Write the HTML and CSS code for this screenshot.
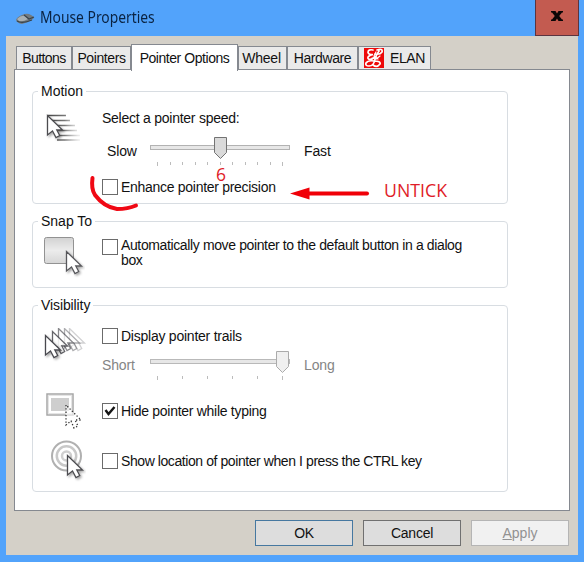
FILE: index.html
```html
<!DOCTYPE html>
<html lang="en">
<head>
<meta charset="utf-8">
<title>Mouse Properties</title>
<link rel="stylesheet" href="styles.css">
</head>
<body>
<svg class="defs" width="0" height="0" aria-hidden="true">
  <defs>
    <filter id="soft" x="-30%" y="-30%" width="180%" height="180%"><feDropShadow dx="1.5" dy="1.5" stdDeviation="1" flood-color="#000" flood-opacity=".35"/></filter>
    <linearGradient id="tile" x1="0" y1="0" x2="0" y2="1"><stop offset="0" stop-color="#d2d2d2"/><stop offset=".5" stop-color="#ececec"/><stop offset="1" stop-color="#d6d6d6"/></linearGradient>
    <linearGradient id="streak" gradientUnits="userSpaceOnUse" x1="3" y1="0" x2="38" y2="0"><stop offset="0" stop-color="#444"/><stop offset=".5" stop-color="#777"/><stop offset="1" stop-color="#bbb" stop-opacity=".1"/></linearGradient>
    <path id="arrow" d="M.5 .5V20L5.5 16L9 22.5L12.7 20.5L9.8 15H15.5Z"/>
  </defs>
</svg>
<div class="window">
  <header class="titlebar">
    <svg class="mouse" width="20" height="12" viewBox="0 0 20 12"><path d="M0 7Q1 4 6 2Q11-.5 15 2Q19 4 17 6Q12 10 6 11Q1 10 0 7Z" fill="#737b80"/><path d="M1 6Q5 2 9 3L12 6Q7 9 3 8Z" fill="#a9b0b3"/><path d="M8 2L13 6L18 4M1 8Q6 11 16 7" fill="none" stroke="#38444c" stroke-width="1.2"/></svg>
    <h1>Mouse Properties</h1>
    <button class="close" aria-label="Close"><svg width="12" height="10" viewBox="0 0 12 10"><path d="M0 0H4.500L6 2.500L7.500 0H12V1.500H11L8.200 5L11 8.500H12V10H7.500L6 7.500L4.500 10H0V8.500H1L3.800 5L1 1.500H0Z" fill="#0b0606"/></svg></button>
  </header>
  <main class="client">
    <nav class="tabs">
      <span class="tab t1">Buttons</span><span class="tab t2">Pointers</span><span class="tab active">Pointer Options</span><span class="tab t4">Wheel</span><span class="tab t5">Hardware</span><span class="tab t6"><svg width="20" height="20" viewBox="0 0 20 20"><rect width="20" height="20" fill="#ed0909"/><g fill="none" stroke="#fff" stroke-linecap="round"><path d="M9 2Q4 1 4 4.500Q5 7 9 6.500Q3 8 4 10.500Q6 13 11 9" stroke-width="1.700"/><path d="M13 2Q19 0 18 4Q16 7 11 6M15 3Q12 7 11 11Q10 18 5 18Q1 18 2 15Q4 12 10 13Q17 13 16 16Q13 20 9 17" stroke-width="1.700"/><path d="M8 10L12 11L16 8M12 4L10 8L14 11" stroke-width="1.200"/></g></svg>ELAN</span>
    </nav>
    <section class="panel">
      <fieldset class="motion">
        <legend>Motion</legend>
        <div class="icon"><svg width="42" height="36" viewBox="0 0 42 36"><path d="M4 2.500H22M7 7.500H26M10 12.500H31M14 17.500H33M13 22.500H36M13 27H36" fill="none" stroke="url(#streak)" stroke-width="1.300"/><use href="#arrow" x="3" y="2" fill="#fff" stroke="#4c4c50" stroke-width="1.300" filter="url(#soft)"/></svg></div>
        <div class="body">
          <p class="label speed">Select a pointer speed:</p>
          <div class="slider-row">
            <span class="from">Slow</span>
            <svg width="142" height="30" viewBox="0 0 142 30"><rect x=".5" y="8.500" width="139" height="4" fill="#e7e7e7" stroke="#b2b2b2"/><path d="M7.500 25V29M20.500 25V28M32.500 25V28M45.500 25V28M57.500 25V28M70.500 25V28M82.500 25V28M95.500 25V28M107.500 25V28M120.500 25V28M132.500 25V29" stroke="#bcbcbc"/><path d="M64.500 .5H76.500V15.500L70.500 21.500L64.500 15.500Z" fill="#dadada" stroke="#737373"/></svg>
            <span class="to">Fast</span>
          </div>
          <label class="check"><i class="box"></i><span class="enhance">Enhance pointer precision</span></label>
        </div>
      </fieldset>
      <fieldset class="snap">
        <legend>Snap To</legend>
        <div class="icon"><svg width="42" height="42" viewBox="0 0 42 42"><rect x="1.500" y="1.500" width="29" height="26" rx="2" fill="url(#tile)" stroke="#929292"/><use href="#arrow" x="23" y="15" fill="#fff" stroke="#58585c" stroke-width="1.300" filter="url(#soft)"/></svg></div>
        <div class="body">
          <label class="check"><i class="box"></i><span class="auto">Automatically move pointer to the default button in a dialog<br>box</span></label>
        </div>
      </fieldset>
      <fieldset class="visibility">
        <legend>Visibility</legend>
        <div class="row trails">
          <div class="icon"><svg width="44" height="36" viewBox="0 0 44 36"><g fill="#fff" stroke="#4a4a50" stroke-width="1.300"><use href="#arrow" x="25" y="0" opacity=".25"/><use href="#arrow" x="20" y="0" opacity=".45"/><use href="#arrow" x="14" y="0" opacity=".65"/><use href="#arrow" x="8" y="3" opacity=".85"/><use href="#arrow" x="1" y="7" filter="url(#soft)"/></g></svg></div>
          <div class="body">
            <label class="check"><i class="box"></i><span class="display">Display pointer trails</span></label>
            <div class="slider-row disabled">
              <span class="from">Short</span>
              <svg width="142" height="30" viewBox="0 0 142 30"><rect x=".5" y="8.500" width="139" height="4" fill="#e7e7e7" stroke="#b9b9b9"/><path d="M7.500 25V29M32.500 25V28M57.500 25V28M82.500 25V28M107.500 25V28M132.500 25V29" stroke="#bcbcbc"/><path d="M126.500 .5H138.500V15.500L132.500 21.500L126.500 15.500Z" fill="#f0f0f0" stroke="#ababab"/></svg>
              <span class="to">Long</span>
            </div>
          </div>
        </div>
        <div class="row hide">
          <div class="icon"><svg width="42" height="40" viewBox="0 0 42 40"><rect x="3" y="2" width="26" height="21" fill="#fff" stroke="#a7a7a7" stroke-width="1.500"/><rect x="4.500" y="3.500" width="23" height="18" fill="none" stroke="#e5e5e5"/><rect x="7" y="6" width="18" height="13" fill="#cecece"/><path d="M22 13V33L27 29L30 36L34 34L31 28H37Z" fill="#fff" fill-opacity=".6" stroke="#333" stroke-width="1.300" stroke-dasharray="1.300 2"/></svg></div>
          <div class="body"><label class="check"><i class="box"><svg width="14" height="14" viewBox="0 0 14 14"><path d="M2.500 6L5.500 10L11.500 3" fill="none" stroke="#151515" stroke-width="2.400"/></svg></i><span class="typing">Hide pointer while typing</span></label></div>
        </div>
        <div class="row locate">
          <div class="icon"><svg width="42" height="44" viewBox="0 0 42 44"><g fill="#fff" stroke="#b0b0b0"><circle cx="22.500" cy="17" r="14.500" stroke-width="2"/><circle cx="22.500" cy="17" r="9.700" stroke="#c8c8c8" stroke-width="2.500"/><circle cx="22.500" cy="17" r="4.500" stroke="#d0d0d0" stroke-width="2.500"/></g><use href="#arrow" x="23" y="16" fill="#fff" stroke="#4c4c50" stroke-width="1.300" filter="url(#soft)"/></svg></div>
          <div class="body"><label class="check"><i class="box"></i><span class="ctrl">Show location of pointer when I press the CTRL key</span></label></div>
        </div>
      </fieldset>
    </section>
    <footer class="actions">
      <button class="btn ok">OK</button><button class="btn">Cancel</button><button class="btn off" disabled><u>A</u>pply</button>
    </footer>
  </main>
  <svg class="notes" width="584" height="562" viewBox="0 0 584 562">
    <path d="M92.500 178Q91 189 95 195Q104 207 117 209Q128 209 136 205.500" fill="none" stroke="#f00814" stroke-width="4" stroke-linecap="round"/>
    <path d="M307 193.500H367" stroke="#f00008" stroke-width="4" stroke-linecap="round"/>
    <path d="M290 193.500L309.500 187.500V199.500Z" fill="#f00008"/>
    <text x="216" y="181" textLength="10" lengthAdjust="spacingAndGlyphs">6</text>
    <text x="384" y="197" textLength="63" lengthAdjust="spacingAndGlyphs">UNTICK</text>
  </svg>
</div>
</body>
</html>
```
FILE: styles.css
```css
* { box-sizing: border-box; }
body { margin: 0; font: 14px/16px "Liberation Sans", Arial, sans-serif; color: #111; }
p, h1 { margin: 0; }
svg { display: block; flex: none; }
.defs { position: absolute; }
.window { position: relative; width: 584px; height: 562px; background: #52a3fb; padding: 0 6px 7px; overflow: hidden; }
.titlebar { display: flex; height: 36px; padding-left: 10px; align-items: flex-start; }
.mouse { margin-top: 13px; }
h1 { margin: 6px 0 0 4px; font: 16px/22px "Noto Sans", "Open Sans", sans-serif; color: #0a2342; white-space: nowrap; transform: scaleX(.865); transform-origin: 0 50%; }
.close { display: flex; align-items: center; justify-content: center; width: 44px; height: 36px; margin-left: auto; margin-right: -1px; padding: 0 0 4px; background: #c35b50; border: 1px solid #5b3440; border-top: 0; }
.client { height: 519px; background: #d4d0c8; padding: 8px 8px 0; }
.tabs { display: flex; align-items: flex-end; height: 26px; padding-left: 2px; position: relative; }
.tab { display: flex; align-items: center; justify-content: center; height: 24px; background: #eaeaea; border: 1px solid #858990; white-space: nowrap; }
.t1 { width: 56px; letter-spacing: -.6px; }
.t2 { width: 59px; letter-spacing: -.4px; }
.t4 { width: 49px; padding-right: 2px; letter-spacing: -.2px; }
.t5 { width: 71px; letter-spacing: -.4px; }
.t6 { width: 73px; gap: 6px; letter-spacing: -.4px; }
.tab.active { width: 107px; height: 27px; margin-bottom: -1px; background: #fff; border-bottom: 0; padding-bottom: 1px; letter-spacing: -.45px; }
.panel { width: 556px; height: 442px; margin-top: -1px; padding: 13px 17px 0; background: #fff; border: 1px solid #858990; }
fieldset { width: 476px; min-width: 0; margin: 0; padding: 0; border: 1px solid #d8dde2; border-radius: 4px; }
legend { height: 16px; margin-left: 5px; padding: 0 3px; }
.motion { height: 121px; margin-bottom: 9px; }
.snap { height: 75px; margin-bottom: 9px; }
.visibility { height: 195px; }
.visibility legend { letter-spacing: -.1px; }
.motion, .snap { display: grid; grid-template-columns: 69px 1fr; align-items: start; }
.icon { padding-left: 11px; }
.motion .icon { padding-top: 14px; }
.motion .body { padding-top: 11px; }
.speed { letter-spacing: -.25px; }
.slider-row { display: grid; grid-template-columns: 48px 154px auto; height: 30px; letter-spacing: -.15px; }
.motion .slider-row { margin: 11px 0 12px; }
.from, .to { padding-top: 6px; }
.motion .from { padding-left: 5px; }
.disabled { color: #858585; margin-top: 7px; }
.check { display: flex; gap: 3px; white-space: nowrap; }
.box { flex: none; width: 16px; height: 16px; background: #fff; border: 1px solid #6b6b6b; }
.enhance { letter-spacing: -.29px; }
.auto { margin-top: -1px; line-height: 15px; letter-spacing: -.375px; }
.display { letter-spacing: -.24px; }
.typing { letter-spacing: -.28px; }
.ctrl { letter-spacing: -.42px; }
.snap .icon { padding: 7px 0 0 10px; }
.snap .body { padding-top: 10px; }
.row { display: grid; grid-template-columns: 69px 1fr; align-items: start; }
.trails { height: 75px; padding-top: 15px; }
.trails .check { height: 16px; }
.hide { height: 50px; padding-top: 15px; }
.hide .icon { margin-top: -11px; }
.locate { padding-top: 15px; }
.locate .icon { margin-top: -14px; }
.actions { display: flex; justify-content: flex-end; gap: 10px; margin-top: 9px; padding-right: 1px; }
.btn { width: 98px; height: 26px; padding: 0; font: inherit; letter-spacing: -.25px; color: #111; background: #ddd; border: 1px solid #707070; }
.ok { border-color: #4678a0; }
.off { color: #929292; background: #f1f1f1; border-color: #b5b5b5; letter-spacing: 0; }
.notes { position: absolute; left: 0; top: 0; pointer-events: none; }
.notes text { font: 17.5px "Open Sans", "Noto Sans", sans-serif; fill: #e01c28; }
```
